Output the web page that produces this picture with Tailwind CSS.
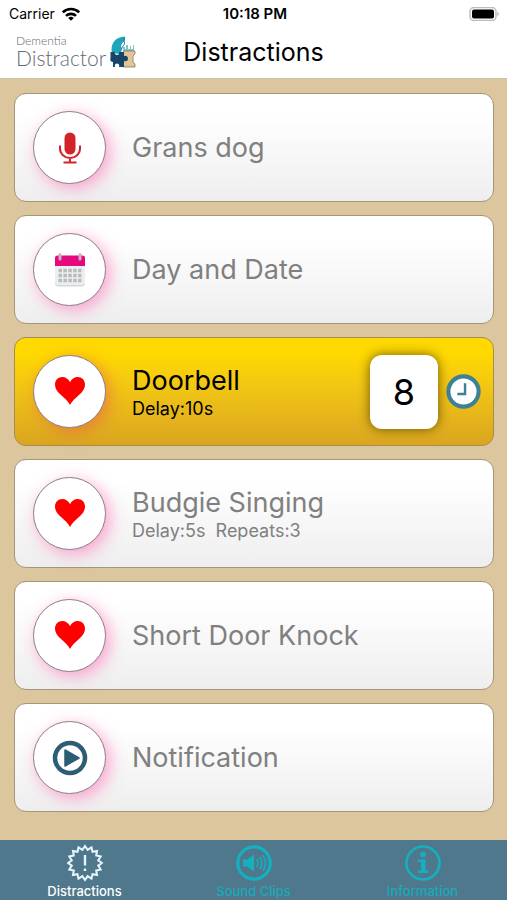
<!DOCTYPE html>
<html lang="en">
<head>
<meta charset="utf-8">
<meta name="viewport" content="width=device-width, initial-scale=1">
<title>Distractions</title>
<script src="https://cdn.jsdelivr.net/npm/@tailwindcss/browser@4"></script>
</head>
<body class="flex min-h-screen flex-col bg-[#dbc69d] font-['Inter','Liberation_Sans',sans-serif] text-black">

<svg class="hidden" aria-hidden="true">
  <symbol id="heart" viewBox="0 0 32 32">
    <path fill="#ff0000" d="M16 30C14.5 26.5 10.5 23 6.5 19.500C3 16.400 1 13.500 1 9.500C1 5 4.200 2 8.300 2C11.500 2 14.600 4 16 7.200C17.400 4 20.500 2 23.700 2C27.800 2 31 5 31 9.500C31 13.500 29 16.400 25.500 19.500C21.500 23 17.500 26.500 16 30Z"/>
  </symbol>
</svg>

<header class="border-b border-[#cfc3ae] bg-white">
  <div class="grid h-7 grid-cols-3 items-center pr-1.5 pl-[9px] text-sm">
    <div class="flex items-center gap-1.5">
      <span>Carrier</span>
      <svg class="h-3.5 w-5" viewBox="0 0 20 14" fill="none" stroke="#000" stroke-width="2.600" role="img" aria-label="Wi-Fi">
        <path d="M1.800 5.400a11.600 11.600 0 0 1 16.400 0"/>
        <path d="M5 8.900a7.200 7.200 0 0 1 10 0"/>
        <path d="M10 13.800L7.200 11a4 4 0 0 1 5.600 0Z" fill="#000" stroke="none"/>
      </svg>
    </div>
    <time class="text-center text-[15px] font-semibold">10:18 PM</time>
    <svg class="h-3.5 w-8 justify-self-end" viewBox="0 0 32 14" role="img" aria-label="Battery full">
      <rect x="1" y="0.500" width="26" height="13" rx="4" fill="#fff" stroke="#bdbdbd" stroke-width="1.500"/>
      <rect x="3" y="2.500" width="22" height="9" rx="2" fill="#000"/>
      <path d="M28.500 4.800q2.500 2.200 0 4.400z" fill="#aaa"/>
    </svg>
  </div>
  <div class="grid h-[50px] grid-cols-[1fr_auto_1fr] items-center px-4 pb-0.5">
    <div class="flex items-center gap-1 font-['Lato','Liberation_Sans',sans-serif] font-light text-[#636b75]">
      <div>
        <div class="text-xs leading-[12px]">Dementia</div>
        <div class="text-[21px] leading-[22px]">Distractor</div>
      </div>
      <svg class="h-8 w-[26px]" viewBox="0 0 26 32" aria-hidden="true">
        <path d="M2 17C0 8 5 1 15 0.500L14.500 5C11.500 7 10 10 12 14L10 18Z" fill="#1da5bb"/>
        <path d="M14.500 1.500L14 6C16 8.500 12 10 11.500 13" fill="none" stroke="#16718c" stroke-width="1"/>
        <path d="M13 14V11h2v2h1V9h2v4h2V10h1v3h2V9h1v6H13Z" fill="#7cc4c9"/>
        <path d="M14 15H25V18L23 20V26L25 28V31H13V16Z" fill="#e2c596" stroke="#7b6b50" stroke-width="0.700"/>
        <path d="M0.500 16H5Q4 19 7 19Q10 19 9 16H14V20Q17 19 18 22Q18 26 14 25V31H9Q10 27.500 7 27.500Q4 27.500 5 31H3V26Q-0.500 26 0.500 22Z" fill="#174568"/>
      </svg>
    </div>
    <h1 class="text-[25px] leading-8">Distractions</h1>
    <span></span>
  </div>
</header>

<main class="flex-1 pt-3.5 pr-[13px] pb-6 pl-3.5">
  <ul class="flex flex-col gap-[13px]">
    <li>
      <button type="button" class="flex h-[109px] w-full items-center rounded-xl border border-[#a5957a] bg-linear-to-b from-white from-20% to-[#eeeeee] pr-3 pl-[18px] text-left text-[#808080]">
        <span class="mr-[26px] flex size-[73px] shrink-0 items-center justify-center rounded-full border border-[#8b7f88] bg-white shadow-[4px_4px_16px_#ff69b499]">
          <svg class="h-8 w-6" viewBox="0 0 24 32" aria-hidden="true">
            <rect x="6.500" y="0.500" width="11" height="22" rx="5.500" fill="#d2232a"/>
            <path d="M2 13.500v3a10 9.500 0 0 0 20 0v-3M12 26v4.500M5.500 30.500h13" fill="none" stroke="#d2232a" stroke-width="2"/>
          </svg>
        </span>
        <span class="text-[27px] leading-8">Grans dog</span>
      </button>
    </li>
    <li>
      <button type="button" class="flex h-[109px] w-full items-center rounded-xl border border-[#a5957a] bg-linear-to-b from-white from-20% to-[#eeeeee] pr-3 pl-[18px] text-left text-[#808080]">
        <span class="mr-[26px] flex size-[73px] shrink-0 items-center justify-center rounded-full border border-[#8b7f88] bg-white shadow-[4px_4px_16px_#ff69b499]">
          <svg class="h-[34px] w-8" viewBox="0 0 32 34" aria-hidden="true">
            <path d="M1 12H31V30a3.500 3.500 0 0 1-3.500 3.500H4.500A3.500 3.500 0 0 1 1 30Z" fill="#d3d9db"/>
            <path d="M1 12H31V28.500a3.500 3.500 0 0 1-3.500 3.500H4.500A3.500 3.500 0 0 1 1 28.500Z" fill="#eceff0"/>
            <path d="M1 13V5a2.500 2.500 0 0 1 2.500-2.500H28.500A2.500 2.500 0 0 1 31 5V13Z" fill="#e6097e"/>
            <path d="M6 1.500v4.500M26 1.500v4.500" stroke="#c9b3bf" stroke-width="3" stroke-linecap="round"/>
            <path d="M4.500 17.500h23M4.500 22.500h23M4.500 27.500h23" stroke="#b9bbbe" stroke-width="3.500" stroke-dasharray="3.500 1.400"/>
          </svg>
        </span>
        <span class="text-[27px] leading-8">Day and Date</span>
      </button>
    </li>
    <li>
      <button type="button" aria-pressed="true" class="flex h-[109px] w-full items-center rounded-xl border border-[#a58c50] bg-linear-to-b from-[#ffd900] from-15% to-[#daa520] pr-3 pl-[18px] text-left text-black">
        <span class="mr-[26px] flex size-[73px] shrink-0 items-center justify-center rounded-full border border-[#8b7f88] bg-white shadow-[4px_4px_16px_#e8604b99]">
          <svg class="mb-0.5 size-8" aria-hidden="true"><use href="#heart"/></svg>
        </span>
        <span class="flex-1 pt-0.5">
          <span class="block text-[27px] leading-8">Doorbell</span>
          <span class="block text-lg leading-6">Delay:10s</span>
        </span>
        <span class="mr-2 flex h-[74px] w-[68px] items-center justify-center rounded-xl bg-white text-4xl shadow-[0_0_12px_#4d3a00cc]">8</span>
        <svg class="size-[35px] shrink-0" viewBox="0 0 34 34" role="img" aria-label="Timer running">
          <circle cx="17" cy="17" r="14.700" fill="#fff" stroke="#3f8096" stroke-width="4"/>
          <path d="M18.500 9v10.500H11" fill="none" stroke="#3f8096" stroke-width="2.400"/>
        </svg>
      </button>
    </li>
    <li>
      <button type="button" class="flex h-[109px] w-full items-center rounded-xl border border-[#a5957a] bg-linear-to-b from-white from-20% to-[#eeeeee] pr-3 pl-[18px] text-left text-[#808080]">
        <span class="mr-[26px] flex size-[73px] shrink-0 items-center justify-center rounded-full border border-[#8b7f88] bg-white shadow-[4px_4px_16px_#ff69b499]">
          <svg class="mb-0.5 size-8" aria-hidden="true"><use href="#heart"/></svg>
        </span>
        <span class="pt-0.5">
          <span class="block text-[27px] leading-8">Budgie Singing</span>
          <span class="block text-lg leading-6 whitespace-pre">Delay:5s  Repeats:3</span>
        </span>
      </button>
    </li>
    <li>
      <button type="button" class="flex h-[109px] w-full items-center rounded-xl border border-[#a5957a] bg-linear-to-b from-white from-20% to-[#eeeeee] pr-3 pl-[18px] text-left text-[#808080]">
        <span class="mr-[26px] flex size-[73px] shrink-0 items-center justify-center rounded-full border border-[#8b7f88] bg-white shadow-[4px_4px_16px_#ff69b499]">
          <svg class="mb-0.5 size-8" aria-hidden="true"><use href="#heart"/></svg>
        </span>
        <span class="text-[27px] leading-8">Short Door Knock</span>
      </button>
    </li>
    <li>
      <button type="button" class="flex h-[109px] w-full items-center rounded-xl border border-[#a5957a] bg-linear-to-b from-white from-20% to-[#eeeeee] pr-3 pl-[18px] text-left text-[#808080]">
        <span class="mr-[26px] flex size-[73px] shrink-0 items-center justify-center rounded-full border border-[#8b7f88] bg-white shadow-[4px_4px_16px_#ff69b499]">
          <svg class="size-9" viewBox="0 0 36 36" aria-hidden="true">
            <circle cx="18" cy="18" r="15" fill="none" stroke="#2b5d73" stroke-width="4.500"/>
            <path d="M13 10L27 18L13 26Z" fill="#2b5d73" stroke="#2b5d73" stroke-width="1.500" stroke-linejoin="round"/>
          </svg>
        </span>
        <span class="text-[27px] leading-8">Notification</span>
      </button>
    </li>
  </ul>
</main>

<nav class="grid h-[60px] grid-cols-3 bg-[#4f788c] pt-1 text-[13px] leading-[14px] font-medium text-[#1ba9b9]">
  <a href="#distractions" aria-current="page" class="flex flex-col items-center gap-0.5 text-white">
    <svg class="h-[38px] w-9" viewBox="0 0 36 36" fill="none" stroke="#e6f6fc" stroke-width="2" aria-hidden="true">
      <path d="M35 18L31.200 20.600L33.700 24.500L29.200 25.500L30 30L25.500 29.200L24.500 33.700L20.600 31.200L18 35L15.400 31.200L11.500 33.700L10.500 29.200L6 30L6.800 25.500L2.300 24.500L4.800 20.600L1 18L4.800 15.400L2.300 11.500L6.800 10.500L6 6L10.500 6.800L11.500 2.300L15.400 4.800L18 1L20.600 4.800L24.500 2.300L25.500 6.800L30 6L29.200 10.500L33.700 11.500L31.200 15.400Z"/>
      <path d="M18 10v10.500M18 23.500v2.500" stroke-width="2.400"/>
    </svg>
    Distractions
  </a>
  <a href="#sound-clips" class="flex flex-col items-center gap-0.5">
    <svg class="h-[38px] w-9" viewBox="0 0 36 36" fill="none" stroke="#14b0c0" aria-hidden="true">
      <circle cx="18" cy="18" r="16.200" stroke-width="3.200"/>
      <path d="M7 14.500h4.500L18 9.500v17L11.500 21.500H7Z" fill="#14b0c0" stroke="none"/>
      <path d="M20.500 14a6 6 0 0 1 0 8M23.500 12a9 9 0 0 1 0 12M26.500 10a12 12 0 0 1 0 16" stroke-width="1.600"/>
    </svg>
    Sound Clips
  </a>
  <a href="#information" class="flex flex-col items-center gap-0.5">
    <svg class="h-[38px] w-9" viewBox="0 0 36 36" fill="none" stroke="#14b0c0" aria-hidden="true">
      <circle cx="18" cy="18" r="16.500" stroke-width="2.600"/>
      <circle cx="18" cy="9.500" r="2.800" fill="#14b0c0" stroke="none"/>
      <path d="M13 14.500h7.500v11H23v2.500H13v-2.500h3v-8.500H13Z" fill="#14b0c0" stroke="none"/>
    </svg>
    Information
  </a>
</nav>
</body>
</html>
